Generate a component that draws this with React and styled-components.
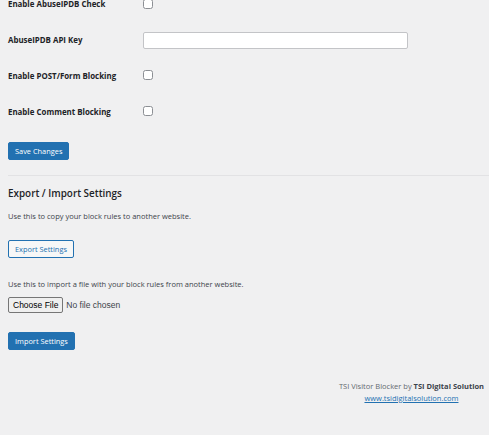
import React from "react";
import styled, { createGlobalStyle } from "styled-components";

const Global = createGlobalStyle`
  html, body { margin: 0; padding: 0; background: #f0f0f1; }
  body { font-family: "Open Sans", "Noto Sans", sans-serif; color: #1d2327; overflow: hidden; }
  * { box-sizing: border-box; }
`;

const Page = styled.div`
  width: 489px;
  height: 435px;
  padding: 0 0 0 8px;
  display: flex;
  flex-direction: column;
`;

const FormTable = styled.div`
  display: flex;
  flex-direction: column;
  margin-top: -14px;
`;

const Row = styled.div`
  display: grid;
  grid-template-columns: 135px 1fr;
  align-items: center;
  height: 36px;
`;

const Label = styled.label`
  font-size: 7.9px;
  font-weight: 700;
  color: #1d2327;
`;

const Checkbox = styled.span`
  display: block;
  width: 10px;
  height: 10px;
  border: 1px solid #8c8f94;
  border-radius: 2.5px;
  background: #fff;
  margin-top: ${(p) => p.$offset || 0}px;
`;

const TextInput = styled.input`
  width: 265px;
  height: 17px;
  border: 1px solid #c3c4c7;
  border-radius: 2px;
  background: #fff;
  outline: none;
  padding: 0 4px;
`;

const Button = styled.button`
  align-self: flex-start;
  height: 18px;
  padding: 0 6px;
  border-radius: 2px;
  font-family: "Open Sans", "Noto Sans", sans-serif;
  font-size: 7.4px;
  line-height: 16px;
  cursor: pointer;
  border: 1px solid #2271b1;
  background: ${(p) => (p.$primary ? "#2271b1" : "#f6f7f7")};
  color: ${(p) => (p.$primary ? "#fff" : "#2271b1")};
  margin-top: ${(p) => p.$mt || 0}px;
`;

const Divider = styled.hr`
  border: 0;
  border-top: 1px solid #e2e2e4;
  margin: 15px 0 0 0;
  width: 100%;
`;

const Heading = styled.h2`
  margin: 10px 0 0 0;
  font-size: 9.9px;
  font-weight: 600;
  line-height: 15px;
  color: #1d2327;
`;

const Desc = styled.p`
  margin: ${(p) => p.$mt || 0}px 0 0 0;
  font-size: 7.5px;
  line-height: 10px;
  color: #3c434a;
`;

const FileRow = styled.div`
  display: flex;
  align-items: center;
  gap: 3px;
  margin-top: 8px;
  font-family: "Liberation Sans", Arial, sans-serif;
  font-size: 8.5px;
  color: #1d2327;
`;

const FileButton = styled.span`
  display: inline-flex;
  align-items: center;
  height: 16px;
  padding: 0 4px;
  border: 1px solid #767676;
  border-radius: 2px;
  background: #efefef;
  color: #000;
`;

const NoFile = styled.span`
  color: #3c434a;
`;

const Footer = styled.div`
  margin-top: 30px;
  align-self: flex-end;
  padding-right: 5px;
  display: flex;
  flex-direction: column;
  align-items: center;
  font-size: 7.5px;
  line-height: 12px;
  color: #646970;
`;

const Strong = styled.strong`
  color: #3c434a;
  font-weight: 700;
`;

const FooterLink = styled.a`
  color: #2271b1;
  text-decoration: underline;
`;

export default function App() {
  return (
    <>
      <Global />
      <Page>
        <FormTable>
          <Row>
            <Label>Enable AbuseIPDB Check</Label>
            <Checkbox $offset={-1} />
          </Row>
          <Row>
            <Label>AbuseIPDB API Key</Label>
            <TextInput type="text" />
          </Row>
          <Row>
            <Label>Enable POST/Form Blocking</Label>
            <Checkbox $offset={-2} />
          </Row>
          <Row>
            <Label>Enable Comment Blocking</Label>
            <Checkbox $offset={-2} />
          </Row>
        </FormTable>
        <Button $primary $mt={12}>Save Changes</Button>
        <Divider />
        <Heading>Export / Import Settings</Heading>
        <Desc $mt={10}>Use this to copy your block rules to another website.</Desc>
        <Button $mt={19}>Export Settings</Button>
        <Desc $mt={21}>Use this to import a file with your block rules from another website.</Desc>
        <FileRow>
          <FileButton>Choose File</FileButton>
          <NoFile>No file chosen</NoFile>
        </FileRow>
        <Button $primary $mt={19}>Import Settings</Button>
        <Footer>
          <span>
            TSI Visitor Blocker by <Strong>TSI Digital Solution</Strong>
          </span>
          <FooterLink href="#">www.tsidigitalsolution.com</FooterLink>
        </Footer>
      </Page>
    </>
  );
}
